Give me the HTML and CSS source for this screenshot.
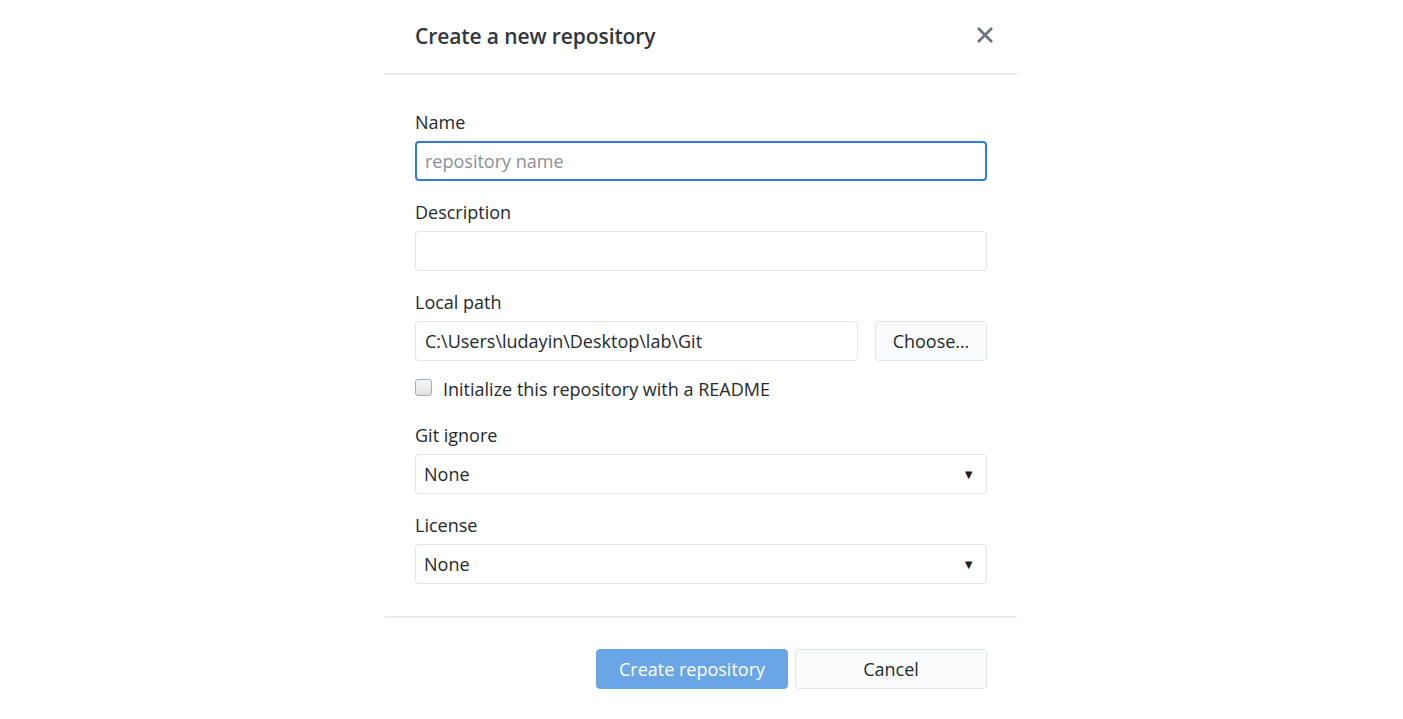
FILE: index.html
```html
<!DOCTYPE html>
<html>
<head>
<meta charset="utf-8">
<link rel="stylesheet" href="styles.css">
</head>
<body>
<div class="dialog">
  <div class="header">
    <h1 class="title">Create a new repository</h1>
    <button class="close" aria-label="Close">
      <svg width="18" height="18" viewBox="0 0 18 18"><path d="M2 2 L16 16 M16 2 L2 16" stroke="#6a737d" stroke-width="2.8" stroke-linecap="butt"/></svg>
    </button>
  </div>
  <div class="body">
    <label class="label">Name</label>
    <input class="input focused" placeholder="repository name">
    <label class="label">Description</label>
    <input class="input">
    <label class="label">Local path</label>
    <div class="row">
      <input class="input grow" value="C:\Users\ludayin\Desktop\lab\Git">
      <button class="btn choose">Choose…</button>
    </div>
    <div class="check-row">
      <span class="checkbox"></span>
      <span class="check-label">Initialize this repository with a README</span>
    </div>
    <label class="label">Git ignore</label>
    <div class="select"><span>None</span><span class="caret">▼</span></div>
    <label class="label">License</label>
    <div class="select"><span>None</span><span class="caret">▼</span></div>
  </div>
  <div class="footer">
    <button class="btn primary">Create repository</button>
    <button class="btn cancel">Cancel</button>
  </div>
</div>
</body>
</html>
```
FILE: styles.css
```css
* { box-sizing: border-box; }
html, body { margin: 0; background: #fff; }
body {
  font-family: "Open Sans", "Noto Sans", sans-serif;
  color: #24292e;
  font-size: 18px;
}
.dialog {
  width: 632px;
  margin-left: 385px;
}
.header {
  height: 75px;
  display: flex;
  align-items: center;
  justify-content: space-between;
  padding: 0 30px;
  border-bottom: 2px solid #e9eaec;
}
.title {
  margin: 0;
  font-size: 21px;
  font-weight: 600;
  color: #2f363d;
  margin-top: -1px;
  letter-spacing: -0.1px;
}
.close {
  border: 0;
  background: none;
  padding: 0;
  width: 20px;
  height: 20px;
  display: flex;
  align-items: center;
  justify-content: center;
  margin-right: -8px;
  margin-top: -4px;
}
.body {
  padding: 35px 30px 32px;
  display: flex;
  flex-direction: column;
}
.label {
  display: block;
  line-height: 24px;
  margin-bottom: 7px;
}
.input {
  display: block;
  width: 100%;
  height: 40px;
  border: 1px solid #e1e4e8;
  border-radius: 4px;
  padding: 0 9px;
  font: inherit;
  color: #24292e;
  margin-bottom: 19px;
  outline: none;
}
.input::placeholder { color: #8b9096; }
.input.focused {
  border: 2px solid #2f7ae0;
  padding: 0 8px;
}
.row {
  display: flex;
  gap: 17px;
}
.row .grow { flex: 1; }
.btn {
  font: inherit;
  height: 40px;
  border-radius: 4px;
  border: 1px solid #e1e4e8;
  background: #fafbfc;
  color: #24292e;
  padding: 0;
}
.choose { width: 112px; flex: none; }
.check-row {
  display: flex;
  align-items: center;
  gap: 11px;
  margin-top: -3px;
  margin-bottom: 22px;
  height: 24px;
}
.checkbox {
  width: 17px;
  height: 17px;
  border: 1px solid #a8acb0;
  border-radius: 3px;
  background: linear-gradient(#f5f6f7, #dfe1e4);
  flex: none;
  margin-left: 0;
  margin-top: -3px;
}
.select {
  height: 40px;
  border: 1px solid #e1e4e8;
  border-radius: 4px;
  display: flex;
  align-items: center;
  justify-content: space-between;
  padding: 0 11px 0 8px;
  margin-bottom: 19px;
}
.select:last-child { margin-bottom: 0; }
.caret { font-size: 13px; color: #1b1f23; }
.footer {
  border-top: 2px solid #e9eaec;
  padding: 31px 30px 0;
  display: flex;
  justify-content: flex-end;
  gap: 7px;
}
.primary {
  width: 192px;
  height: 40px;
  background: #6aa5e6;
  border-color: #6aa5e6;
  color: #fff;
}
.cancel { width: 192px; }
```
